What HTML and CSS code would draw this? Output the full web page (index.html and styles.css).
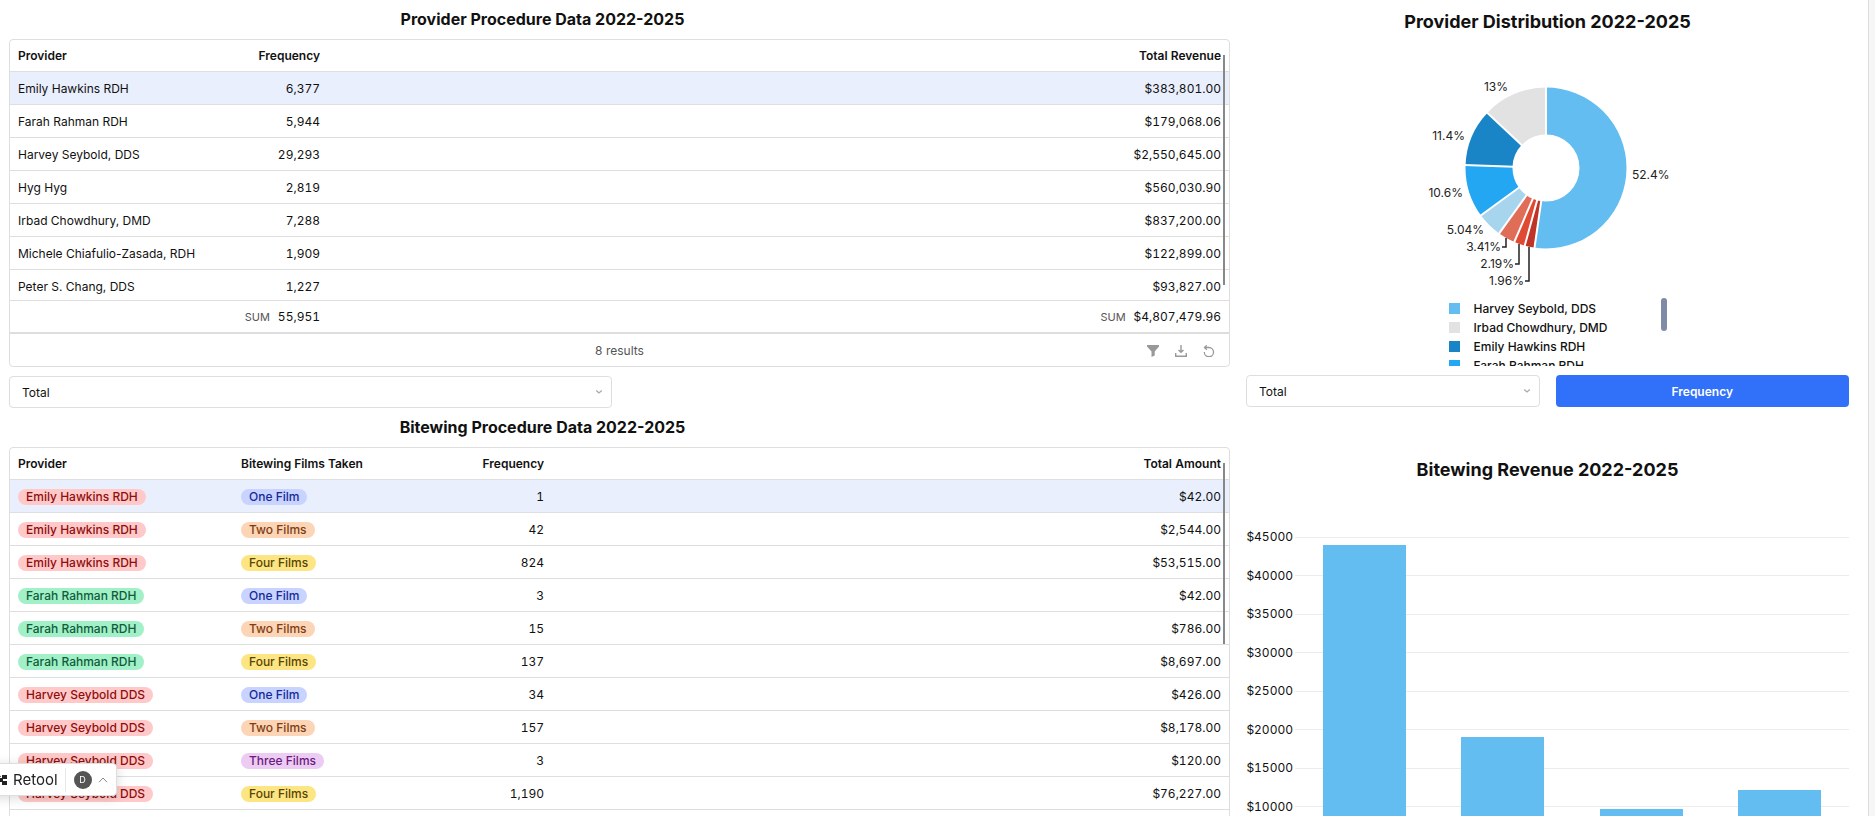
FILE: index.html
```html
<!DOCTYPE html>
<html lang="en">
<head>
<meta charset="utf-8">
<title>Provider Dashboard 2022-2025</title>
<link rel="stylesheet" href="styles.css">
</head>
<body>
<main class="canvas">
  <section class="col">
    <h2 class="title">Provider Procedure Data 2022-2025</h2>
    <div class="card providers">
      <div class="scroll">
        <table>
          <colgroup><col class="c-name"><col class="c-freq"><col></colgroup>
          <thead><tr><th>Provider</th><th class="num">Frequency</th><th class="num">Total Revenue</th></tr></thead>
          <tbody>
            <tr class="selected"><td>Emily Hawkins RDH</td><td class="num">6,377</td><td class="num">$383,801.00</td></tr>
            <tr><td>Farah Rahman RDH</td><td class="num">5,944</td><td class="num">$179,068.06</td></tr>
            <tr><td>Harvey Seybold, DDS</td><td class="num">29,293</td><td class="num">$2,550,645.00</td></tr>
            <tr><td>Hyg Hyg</td><td class="num">2,819</td><td class="num">$560,030.90</td></tr>
            <tr><td>Irbad Chowdhury, DMD</td><td class="num">7,288</td><td class="num">$837,200.00</td></tr>
            <tr><td>Michele Chiafulio-Zasada, RDH</td><td class="num">1,909</td><td class="num">$122,899.00</td></tr>
            <tr><td>Peter S. Chang, DDS</td><td class="num">1,227</td><td class="num">$93,827.00</td></tr>
          </tbody>
        </table>
      </div>
      <table class="summary">
        <colgroup><col class="c-name"><col class="c-freq"><col></colgroup>
        <tbody><tr><td></td><td class="num"><span class="sum">SUM</span>55,951</td><td class="num"><span class="sum">SUM</span>$4,807,479.96</td></tr></tbody>
      </table>
      <div class="foot">
        <span>8 results</span>
        <div class="tools">
          <button type="button" aria-label="Filter"><svg width="12" height="12" viewBox="0 0 12 12"><path d="M0 0h12v1.500L7.700 6.400v4.200L4.500 12V6.400L0 1.500z" fill="#999"/></svg></button>
          <button type="button" aria-label="Download"><svg width="12" height="12" viewBox="0 0 12 12" fill="none" stroke="#999" stroke-width="1.400"><path d="M.7 8v3.300h10.600V8M6 0v7M3.500 5 6 7.300 8.500 5"/></svg></button>
          <button type="button" aria-label="Refresh"><svg width="12" height="12" viewBox="0 0 12 12" fill="none" stroke="#999" stroke-width="1.300"><path d="M1.300 7A4.600 4.600 0 1 0 6 2.500H1.500M3.800.3 1.500 2.500l2.300 2.200"/></svg></button>
        </div>
      </div>
      <div class="bar bar-long"></div>
    </div>
    <select class="field half" aria-label="Procedure"><option>Total</option></select>
    <h2 class="title">Bitewing Procedure Data 2022-2025</h2>
    <div class="card bitewing">
      <table>
        <colgroup><col class="c-name"><col class="c-film"><col class="c-count"><col></colgroup>
        <thead><tr><th>Provider</th><th>Bitewing Films Taken</th><th class="num">Frequency</th><th class="num">Total Amount</th></tr></thead>
        <tbody>
          <tr class="selected"><td><span class="tag red">Emily Hawkins RDH</span></td><td><span class="tag blue">One Film</span></td><td class="num">1</td><td class="num">$42.00</td></tr>
          <tr><td><span class="tag red">Emily Hawkins RDH</span></td><td><span class="tag orange">Two Films</span></td><td class="num">42</td><td class="num">$2,544.00</td></tr>
          <tr><td><span class="tag red">Emily Hawkins RDH</span></td><td><span class="tag yellow">Four Films</span></td><td class="num">824</td><td class="num">$53,515.00</td></tr>
          <tr><td><span class="tag green">Farah Rahman RDH</span></td><td><span class="tag blue">One Film</span></td><td class="num">3</td><td class="num">$42.00</td></tr>
          <tr><td><span class="tag green">Farah Rahman RDH</span></td><td><span class="tag orange">Two Films</span></td><td class="num">15</td><td class="num">$786.00</td></tr>
          <tr><td><span class="tag green">Farah Rahman RDH</span></td><td><span class="tag yellow">Four Films</span></td><td class="num">137</td><td class="num">$8,697.00</td></tr>
          <tr><td><span class="tag red">Harvey Seybold DDS</span></td><td><span class="tag blue">One Film</span></td><td class="num">34</td><td class="num">$426.00</td></tr>
          <tr><td><span class="tag red">Harvey Seybold DDS</span></td><td><span class="tag orange">Two Films</span></td><td class="num">157</td><td class="num">$8,178.00</td></tr>
          <tr><td><span class="tag red">Harvey Seybold DDS</span></td><td><span class="tag purple">Three Films</span></td><td class="num">3</td><td class="num">$120.00</td></tr>
          <tr><td><span class="tag red">Harvey Seybold DDS</span></td><td><span class="tag yellow">Four Films</span></td><td class="num">1,190</td><td class="num">$76,227.00</td></tr>
          <tr><td></td><td></td><td></td><td></td></tr>
        </tbody>
      </table>
      <div class="bar bar-short"></div>
    </div>
  </section>

  <section class="col">
    <div class="pie">
      <h2 class="chart-title">Provider Distribution 2022-2025</h2>
      <svg class="donut" width="300" height="240" viewBox="0 0 300 240" role="img" aria-label="Provider share">
        <g transform="translate(148 118)">
          <g transform="rotate(-90)" fill="none" stroke-width="47">
            <circle r="57" pathLength="100" stroke="#63bdf0" stroke-dasharray="52.4 47.6"/>
            <circle r="57" pathLength="100" stroke="#c03427" stroke-dasharray="1.96 98.04" stroke-dashoffset="-52.4"/>
            <circle r="57" pathLength="100" stroke="#e04a32" stroke-dasharray="2.19 97.81" stroke-dashoffset="-54.36"/>
            <circle r="57" pathLength="100" stroke="#df6d57" stroke-dasharray="3.41 96.59" stroke-dashoffset="-56.55"/>
            <circle r="57" pathLength="100" stroke="#a7d5ee" stroke-dasharray="5.04 94.96" stroke-dashoffset="-59.96"/>
            <circle r="57" pathLength="100" stroke="#23a7f2" stroke-dasharray="10.6 89.4" stroke-dashoffset="-65"/>
            <circle r="57" pathLength="100" stroke="#1985c7" stroke-dasharray="11.4 88.6" stroke-dashoffset="-75.6"/>
            <circle r="57" pathLength="100" stroke="#e2e2e2" stroke-dasharray="13 87" stroke-dashoffset="-87"/>
          </g>
          <g stroke="#fff" stroke-width="2">
            <path d="M0-32V-82"/>
            <path d="M0-32V-82" transform="rotate(188.2)"/>
            <path d="M0-32V-82" transform="rotate(195.3)"/>
            <path d="M0-32V-82" transform="rotate(203.2)"/>
            <path d="M0-32V-82" transform="rotate(215.6)"/>
            <path d="M0-32V-82" transform="rotate(234)"/>
            <path d="M0-32V-82" transform="rotate(272.1)"/>
            <path d="M0-32V-82" transform="rotate(313.2)"/>
          </g>
        </g>
        <g fill="none" stroke="#222" stroke-width="1.5">
          <path d="M108 188v9h-4M121 194v20h-4M131 197v34h-4"/>
        </g>
        <g class="pct">
          <text x="234" y="129">52.4%</text>
          <text class="end" x="110" y="41">13%</text>
          <text class="end" x="67" y="90">11.4%</text>
          <text class="end" x="65" y="147">10.6%</text>
          <text class="end" x="86" y="184">5.04%</text>
          <text class="end" x="103" y="201">3.41%</text>
          <text class="end" x="116" y="218">2.19%</text>
          <text class="end" x="126" y="235">1.96%</text>
        </g>
      </svg>
      <div class="legend">
        <ul>
          <li class="l-sky">Harvey Seybold, DDS</li>
          <li class="l-grey">Irbad Chowdhury, DMD</li>
          <li class="l-navy">Emily Hawkins RDH</li>
          <li class="l-azure">Farah Rahman RDH</li>
        </ul>
        <span class="thumb"></span>
      </div>
    </div>
    <div class="controls">
      <select class="field" aria-label="Provider measure"><option>Total</option></select>
      <button type="button" class="primary">Frequency</button>
    </div>
    <h2 class="chart-title lower">Bitewing Revenue 2022-2025</h2>
    <div class="chart">
      <div class="ticks">
        <div><span>$45000</span></div><div><span>$40000</span></div><div><span>$35000</span></div><div><span>$30000</span></div><div><span>$25000</span></div><div><span>$20000</span></div><div><span>$15000</span></div><div><span>$10000</span></div><div><span>$5000</span></div><div><span>$0</span></div>
      </div>
      <div class="bars">
        <div style="height:97.7%"></div><div style="height:42.3%"></div><div style="height:21.6%"></div><div style="height:27.1%"></div>
      </div>
    </div>
  </section>
</main>
<div class="badge">
  <svg width="16" height="14" viewBox="0 0 16 14" fill="#222"><path d="M0 1h8l2 3H7v2H0zM11 2h5v4h-4V8h4v4h-5V9H8V5h3z"/></svg>
  <span class="brand">Retool</span>
  <span class="avatar">D</span>
  <svg width="10" height="6" viewBox="0 0 10 6" fill="none" stroke="#888"><path d="M1 5.200 5 1l4 4.200"/></svg>
</div>
</body>
</html>
```
FILE: styles.css
```css
* { box-sizing: border-box; }
html { height: 100%; background: #f6f6f6; }
body {
  margin: 0;
  height: 100vh;
  overflow: hidden;
  font: 12px/16px Inter, "Liberation Sans", sans-serif;
  color: #111;
}
.canvas {
  display: grid;
  grid-template-columns: 1221fr 603fr;
  gap: 16px;
  min-height: 100%;
  margin-right: 6px;
  padding: 0 19px 0 9px;
  background: #fff;
  border-right: 1px solid #dcdcdc;
}
.col { display: flex; flex-direction: column; min-width: 0; }
h2 { margin: 0; font-weight: 700; text-align: center; }
.title { padding: 8px 154px 8px 0; font-size: 16px; line-height: 23px; }
.chart-title { padding: 10px 0 6px; font-size: 18px; line-height: 24px; }

.card { position: relative; border: 1px solid #dedede; border-radius: 4px; background: #fff; overflow: hidden; }
table { width: 100%; table-layout: fixed; border-collapse: separate; border-spacing: 0; }
.c-name { width: 223px; }
.c-freq { width: 95px; }
.c-film { width: 213px; }
.c-count { width: 106px; }
th, td { height: 33px; padding: 0 8px; border-bottom: 1px solid #dedede; text-align: left; font-weight: 400; white-space: nowrap; }
td { padding-top: 2px; }
th { height: 32px; font-weight: 600; }
.num { text-align: right; font-variant-numeric: tabular-nums; }
.selected td { background: #e9effd; }
.scroll { height: 261px; overflow: hidden; border-bottom: 1px solid #dedede; }
.summary td { height: 33px; padding-top: 0; border-bottom: 2px solid #dedede; }
.sum { margin-right: 8px; font-size: 11px; color: #555; }
.foot { display: grid; grid-template-columns: 1fr auto 1fr; align-items: center; height: 32px; padding: 2px 14px 0; color: #555; }
.foot > span { grid-column: 2; }
.tools { display: flex; justify-content: flex-end; gap: 16px; }
.tools button { display: flex; padding: 0; border: 0; background: none; }
.bar { position: absolute; top: 15px; right: 4px; width: 2px; background: #888; }
.bar-long { height: 230px; }
.bar-short { height: 181px; }

.field {
  height: 32px;
  padding: 1px 12px 0;
  border: 1px solid #dedede;
  border-radius: 4px;
  font: inherit;
  color: #111;
  appearance: none;
  background: #fff url("data:image/svg+xml,%3Csvg xmlns='http://www.w3.org/2000/svg' width='8' height='6' fill='none' stroke='%23aaa' stroke-width='1.300'%3E%3Cpath d='M1.200 1.500 4 4l2.800-2.500'/%3E%3C/svg%3E") no-repeat right 8px center;
}
.half { width: 603px; margin-top: 9px; }
.controls { display: grid; grid-template-columns: 1fr 1fr; gap: 16px; margin-top: 9px; }
.primary { padding: 2px 0 0; border: 0; border-radius: 4px; background: #3170f9; color: #fff; font: inherit; font-weight: 600; }

.tag { display: inline-block; padding: 0 8px; border-radius: 8px; font-weight: 500; vertical-align: middle; }
.red { background: #ffc9c9; color: #8f0d0d; }
.green { background: #a1f0c7; color: #105c3a; }
.blue { background: #c8d3ff; color: #152a98; }
.orange { background: #fcd4b6; color: #803c10; }
.yellow { background: #fde584; color: #574500; }
.purple { background: #edccf3; color: #6b1b7e; }

.pie { display: flex; flex-direction: column; height: 366px; overflow: hidden; }
.donut { display: block; flex: none; align-self: center; margin-top: 10px; }
.pct { fill: #222; font-size: 12px; }
.end { text-anchor: end; }
.legend { display: flex; justify-content: space-between; align-self: center; width: 218px; margin-top: 8px; margin-left: 20px; }
.legend ul { margin: 0; padding: 1px 0 0; list-style: none; line-height: 19px; font-weight: 500; }
.legend li { display: flex; align-items: center; gap: 14px; }
.legend li::before { content: ""; width: 11px; height: 11px; }
.l-sky::before { background: #63bdf0; }
.l-grey::before { background: #e2e2e2; }
.l-navy::before { background: #1985c7; }
.l-azure::before { background: #23a7f2; }
.thumb { width: 6px; height: 33px; border-radius: 3px; background: #808ba8; }

.lower { padding-top: 51px; }
.chart { display: grid; height: 347px; margin-top: 49px; }
.ticks, .bars { grid-area: 1 / 1; }
.ticks { display: flex; flex-direction: column; justify-content: space-between; font-variant-numeric: tabular-nums; }
.ticks div { display: flex; align-items: center; gap: 2px; height: 0; }
.ticks span { width: 47px; text-align: right; }
.ticks div::after { content: ""; flex: 1; height: 1px; background: #ececec; }
.bars { display: grid; grid-template-columns: repeat(4, 1fr); align-items: end; justify-items: center; margin-left: 49px; }
.bars div { width: 60%; background: #63bdf0; }

.badge {
  position: fixed;
  left: -10px;
  bottom: 20px;
  display: flex;
  align-items: center;
  height: 33px;
  width: 127px;
  background: #fff;
  border: 1px solid #dedede;
  border-radius: 4px;
  box-shadow: 0 2px 12px rgba(0, 0, 0, .15);
}
.brand { padding: 0 7px 0 6px; border-right: 1px solid #e8e8e8; font-size: 15px; line-height: 24px; color: #222; }
.avatar { width: 18px; height: 18px; margin: 0 6px 0 8px; border-radius: 50%; background: #555; color: #fff; font-size: 9px; line-height: 18px; text-align: center; }
```
